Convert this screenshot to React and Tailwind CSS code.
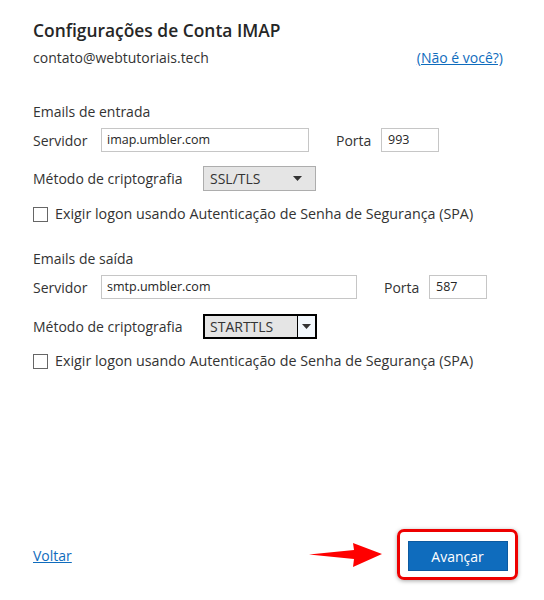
import React from 'react'

const Caret = () => (
  <svg width="9" height="5" viewBox="0 0 9 5"><path d="M0 0h9L4.5 5z" fill="#333" /></svg>
)

const ServerRow = ({ host, port, hostWidth, portGap }) => (
  <div className="flex items-center h-[24px]">
    <span className="w-[68px] text-[14px]">Servidor</span>
    <div className={`${hostWidth} h-[24px] border border-[#c6c6c6] flex items-center pl-[5px] text-[12.5px] text-[#262626]`}>{host}</div>
    <span className={`${portGap} w-[45px] text-[14px]`}>Porta</span>
    <div className="w-[58px] h-[24px] border border-[#c6c6c6] flex items-center pl-[6px] text-[12.5px] text-[#262626]">{port}</div>
  </div>
)

const Checkbox = () => (
  <div className="flex items-center h-[20px] gap-[7px]">
    <div className="w-[15px] h-[15px] border border-[#666] bg-white" />
    <span className="text-[14.3px]">Exigir logon usando Autenticação de Senha de Segurança (SPA)</span>
  </div>
)

const App = () => {
  return (
    <div className="w-[544px] h-[600px] bg-white flex flex-col pl-[33px] pt-[18px] pb-[20px] text-[#333] font-['Open_Sans',sans-serif]">
      <h1 className="text-[17.4px] leading-[24px] font-semibold text-[#262626]">Configurações de Conta IMAP</h1>
      <div className="mt-[5px] w-[470px] flex justify-between items-center h-[20px] text-[14px]">
        <span>contato@webtutoriais.tech</span>
        <a href="#" className="text-[#0f6cbd] underline">(Não é você?)</a>
      </div>

      <div className="mt-[35px] h-[20px] text-[14px] leading-[20px]">Emails de entrada</div>
      <div className="mt-[6px]">
        <ServerRow host="imap.umbler.com" port="993" hostWidth="w-[208px]" portGap="ml-[27px]" />
      </div>
      <div className="mt-[14px] flex items-center h-[25px]">
        <span className="w-[170px] text-[14px]">Método de criptografia</span>
        <div className="w-[113px] h-[25px] border border-[#adadad] bg-[#e5e5e5] flex items-center justify-between pl-[6px] pr-[13px] text-[14px]">
          <span>SSL/TLS</span>
          <Caret />
        </div>
      </div>
      <div className="mt-[13px]"><Checkbox /></div>

      <div className="mt-[25px] h-[20px] text-[14px] leading-[20px]">Emails de saída</div>
      <div className="mt-[6px]">
        <ServerRow host="smtp.umbler.com" port="587" hostWidth="w-[256px]" portGap="ml-[27px]" />
      </div>
      <div className="mt-[15px] flex items-center h-[25px]">
        <span className="w-[170px] text-[14px]">Método de criptografia</span>
        <div className="w-[114px] h-[25px] border-2 border-black flex text-[14px]">
          <div className="flex-1 bg-[#e5e5e5] flex items-center pl-[5px] border-r border-black">STARTTLS</div>
          <div className="w-[17px] bg-[#f3f8fd] flex items-center justify-center"><Caret /></div>
        </div>
      </div>
      <div className="mt-[12px]"><Checkbox /></div>

      <div className="mt-auto flex items-center">
        <a href="#" className="text-[#0f6cbd] underline text-[14px] mt-[2px]">Voltar</a>
        <svg className="ml-auto" width="74" height="28" viewBox="0 0 74 28">
          <path d="M0 13.5 L45 9 L44 2 L73 13 L44 26 L45 18 Z" fill="#f00" />
        </svg>
        <div className="ml-[14px] mr-[26px] w-[121px] h-[51px] border-[3px] border-[#e00] rounded-[7px] shadow-[0_1px_4px_rgba(0,0,0,0.35)] flex items-center justify-center pt-[3px]">
          <button className="w-[100px] h-[30px] bg-[#0f6cbd] border border-[#0c5aa0] text-white text-[14px]">Avançar</button>
        </div>
      </div>
    </div>
  )
}

export default App
